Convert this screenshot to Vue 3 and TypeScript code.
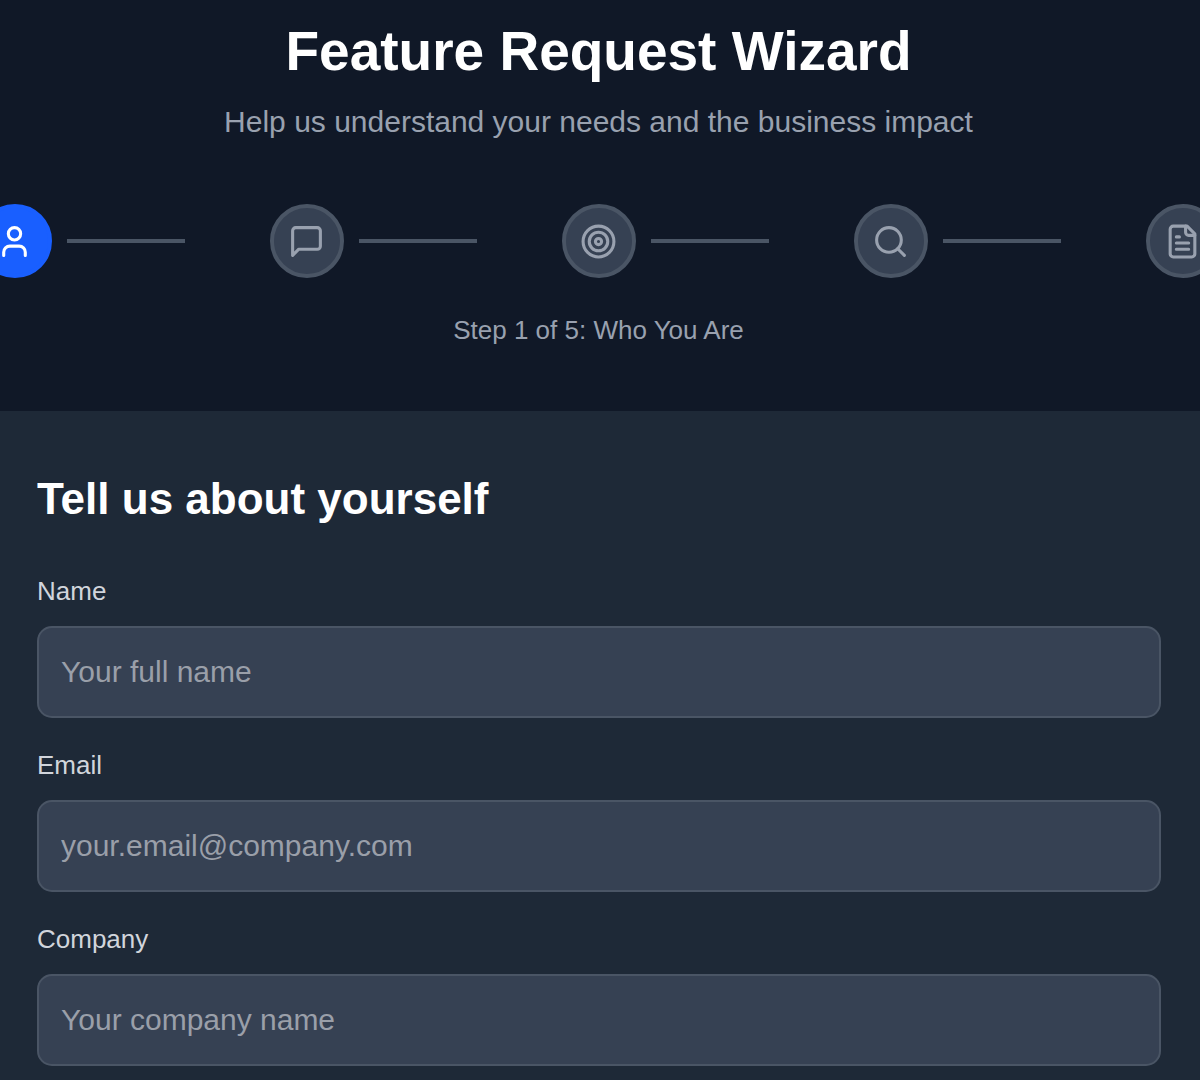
<script setup lang="ts">
import { reactive, ref } from 'vue'

interface Step {
  id: string
  title: string
}

interface Field {
  key: 'name' | 'email' | 'company'
  label: string
  type: string
  placeholder: string
}

const steps: Step[] = [
  { id: 'user', title: 'Who You Are' },
  { id: 'message', title: 'Your Request' },
  { id: 'target', title: 'Your Goals' },
  { id: 'search', title: 'Details' },
  { id: 'file', title: 'Summary' },
]

const fields: Field[] = [
  { key: 'name', label: 'Name', type: 'text', placeholder: 'Your full name' },
  { key: 'email', label: 'Email', type: 'email', placeholder: 'your.email@company.com' },
  { key: 'company', label: 'Company', type: 'text', placeholder: 'Your company name' },
]

const current = ref(0)
const form = reactive({ name: '', email: '', company: '' })
</script>

<template>
  <main class="page">
    <header class="intro">
      <h1 class="title">Feature Request Wizard</h1>
      <p class="subtitle">Help us understand your needs and the business impact</p>
      <ol class="steps">
        <li v-for="(step, i) in steps" :key="step.id" class="step">
          <span class="dot" :class="{ active: i === current }">
            <svg class="icon" viewBox="0 0 24 24" aria-hidden="true">
              <template v-if="step.id === 'user'">
                <path d="M19 21v-2a4 4 0 0 0-4-4H9a4 4 0 0 0-4 4v2" />
                <circle cx="12" cy="7" r="4" />
              </template>
              <path
                v-else-if="step.id === 'message'"
                d="M21 15a2 2 0 0 1-2 2H7l-4 4V5a2 2 0 0 1 2-2h14a2 2 0 0 1 2 2z"
              />
              <template v-else-if="step.id === 'target'">
                <circle cx="12" cy="12" r="10" />
                <circle cx="12" cy="12" r="6" />
                <circle cx="12" cy="12" r="2" />
              </template>
              <template v-else-if="step.id === 'search'">
                <circle cx="11" cy="11" r="8" />
                <path d="m21 21-4.3-4.3" />
              </template>
              <template v-else>
                <path d="M15 2H6a2 2 0 0 0-2 2v16a2 2 0 0 0 2 2h12a2 2 0 0 0 2-2V7Z" />
                <path d="M14 2v4a2 2 0 0 0 2 2h4" />
                <path d="M10 9H8M16 13H8M16 17H8" />
              </template>
            </svg>
          </span>
          <span v-if="i < steps.length - 1" class="line"></span>
        </li>
      </ol>
      <p class="progress">Step {{ current + 1 }} of {{ steps.length }}: {{ steps[current].title }}</p>
    </header>

    <form class="card" @submit.prevent>
      <h2 class="heading">Tell us about yourself</h2>
      <div class="fields">
        <div v-for="field in fields" :key="field.key" class="field">
          <label class="label" :for="field.key">{{ field.label }}</label>
          <input
            :id="field.key"
            v-model="form[field.key]"
            class="input"
            :type="field.type"
            :placeholder="field.placeholder"
          />
        </div>
      </div>
    </form>
  </main>
</template>

<style>
body {
  margin: 0;
  background: #101827;
}
</style>

<style scoped>
.page {
  box-sizing: border-box;
  display: flex;
  flex-direction: column;
  min-height: 100vh;
  background: #101827;
  font-family: 'Liberation Sans', Arial, sans-serif;
}

.intro {
  display: flex;
  flex-direction: column;
  align-items: center;
  overflow: hidden;
  padding: 18px 3px 62px 0;
  text-align: center;
}

.title {
  margin: 0 0 15px;
  color: #fff;
  font-size: 55px;
  font-weight: 700;
  line-height: 67px;
}

.subtitle {
  margin: 0 0 60px;
  color: #99a1af;
  font-size: 30px;
  line-height: 44px;
}

.steps {
  display: flex;
  gap: 85px;
  margin: 0 0 34px;
  padding: 0;
  list-style: none;
}

.step {
  display: flex;
  flex: none;
  align-items: center;
  gap: 15px;
}

.dot {
  box-sizing: border-box;
  display: flex;
  align-items: center;
  justify-content: center;
  width: 74px;
  height: 74px;
  border: 4px solid #4a5565;
  border-radius: 50%;
  background: #364153;
  color: #99a1af;
}

.dot.active {
  border-color: #195fff;
  background: #195fff;
  color: #fff;
}

.icon {
  width: 37px;
  height: 37px;
  fill: none;
  stroke: currentColor;
  stroke-width: 2;
  stroke-linecap: round;
  stroke-linejoin: round;
}

.line {
  width: 118px;
  height: 4px;
  background: #4a5565;
}

.progress {
  margin: 0;
  color: #99a1af;
  font-size: 26px;
  line-height: 37px;
}

.card {
  flex: 1;
  padding: 58px 39px 15px 37px;
  background: #1e2937;
}

.heading {
  margin: 0 0 45px;
  color: #fff;
  font-size: 44px;
  font-weight: 700;
  line-height: 59px;
}

.fields {
  display: flex;
  flex-direction: column;
  gap: 29px;
}

.field {
  display: flex;
  flex-direction: column;
  gap: 16px;
}

.label {
  color: #d1d5dc;
  font-size: 26px;
  line-height: 37px;
}

.input {
  box-sizing: border-box;
  width: 100%;
  height: 92px;
  padding: 0 22px;
  border: 2px solid #4a5565;
  border-radius: 15px;
  outline: none;
  background: #364153;
  color: #fff;
  font-family: inherit;
  font-size: 30px;
}

.input:focus {
  border-color: #195fff;
}

.input::placeholder {
  color: #9a9fa9;
  opacity: 1;
}
</style>
